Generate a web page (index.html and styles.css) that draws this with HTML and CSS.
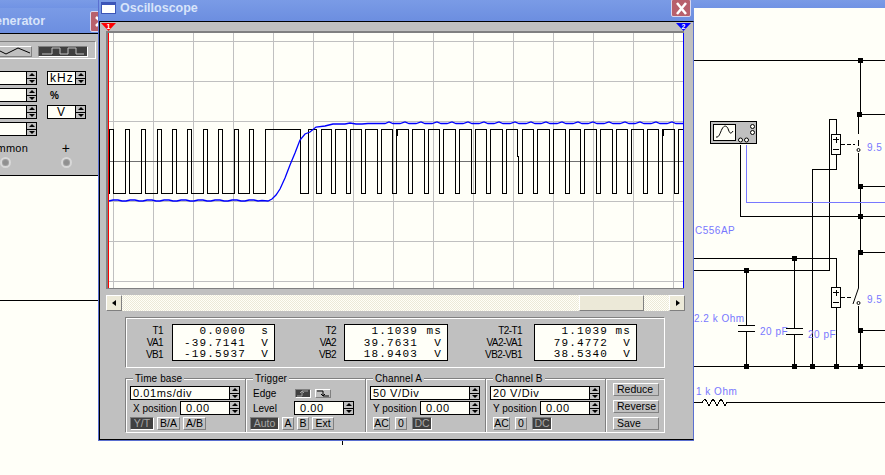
FILE: index.html
```html
<!DOCTYPE html>
<html lang="en">
<head>
<meta charset="utf-8">
<title>Oscilloscope</title>
<link rel="stylesheet" href="styles.css">
</head>
<body>
<main class="desktop">
  <div class="topstrip"></div>

  <svg class="schematic" viewBox="0 0 885 475" width="885" height="475">
    <g class="wire">
      <path d="M0 300.5H99"/>
      <path d="M342.500 440V445"/>
      <path d="M694 60.500H885"/>
      <path d="M860.500 60V114"/>
      <path d="M858.500 114.500H885"/>
      <path d="M858.500 114V134M858.500 140V146M858.500 153V186"/>
      <path d="M860 186.500H885"/>
      <path d="M860.500 186V252"/>
      <path d="M858.500 252V288M858.500 306V330"/>
      <path d="M860 252.500H885"/>
      <path d="M860 330.500H885"/>
      <path d="M860.500 330V366"/>
      <path d="M694 366.500H885"/>
      <path d="M694 258.500H836.500V287"/>
      <path d="M694 270.500H829.500V119.500H836.500V134"/>
      <path d="M836.500 154V169.500H812.500V366"/>
      <path d="M836.500 307V366"/>
      <path d="M746.500 270V325M746.500 332V366M738 325.500H755M738 331.500H755"/>
      <path d="M794.500 258V328M794.500 335V366M786 328.500H803M786 334.500H803"/>
      <path d="M740.500 145V216.500H885"/>
      <path d="M694 402.500H702L705 399L709 405.500L713 399L717 405.500L721 399L725 405.500L727 402.500H885"/>
      <path class="dash" d="M841 144.500H855"/>
      <path class="dash" d="M841 297.500H853"/>
      <path d="M853 304L858.500 288"/>
    </g>
    <path class="probe" d="M746.500 145V202.500H885"/>
    <g class="node">
      <rect x="858" y="58" width="5" height="5"/><rect x="857" y="112" width="5" height="5"/>
      <rect x="858" y="184" width="5" height="5"/><rect x="858" y="214" width="5" height="5"/>
      <rect x="858" y="250" width="5" height="5"/><rect x="858" y="328" width="5" height="5"/>
      <rect x="744" y="268" width="5" height="5"/><rect x="792" y="256" width="5" height="5"/>
      <rect x="744" y="364" width="5" height="5"/><rect x="792" y="364" width="5" height="5"/>
      <rect x="810" y="364" width="5" height="5"/><rect x="834" y="364" width="5" height="5"/>
      <rect x="858" y="364" width="5" height="5"/>
    </g>
    <g class="relay">
      <rect x="831.500" y="134.500" width="9" height="20"/>
      <path d="M833 139.500H839M836 136.500V142.500M833 149.500H839"/>
      <rect x="831.500" y="287.500" width="9" height="20"/>
      <path d="M833 292.500H839M836 289.500V295.500M833 302.500H839"/>
      <circle cx="858.500" cy="150" r="1.500"/>
      <circle cx="858.500" cy="303" r="1.500"/>
    </g>
    <g class="scope-icon">
      <rect class="case" x="710.500" y="121.500" width="46" height="22"/>
      <rect class="face" x="713.500" y="124.500" width="22" height="16"/>
      <path class="sine" d="M716 137C719 138 720 133 722 129C724 125 727 125 728.500 130C730 134 731 134 733 131"/>
      <circle cx="752.500" cy="126.500" r="2"/><circle cx="752.500" cy="132.500" r="2"/>
      <circle cx="740.500" cy="140" r="2"/><circle cx="746.500" cy="140" r="2"/>
    </g>
    <g class="label">
      <text x="695" y="234">C556AP</text>
      <text x="694" y="322">2.2 k Ohm</text>
      <text x="760" y="335">20 pF</text>
      <text x="808" y="338">20 pF</text>
      <text x="696" y="395">1 k Ohm</text>
      <text x="867" y="151">9.5 V</text>
      <text x="867" y="303">9.5 V</text>
    </g>
  </svg>

  <section class="generator">
    <header class="gen-title">
      <span>Function Generator</span>
      <span class="closebtn gen-close"><svg viewBox="0 0 19 19" width="19" height="19"><path d="M5 5L14 14M14 5L5 14"/></svg></span>
    </header>
    <div class="gen-body">
      <div class="wave-group">
        <span class="wave-btn"><svg viewBox="0 0 50 10" width="50" height="10"><path d="M2 5L12 2L24 8L36 2L48 7"/></svg></span>
        <span class="wave-btn wave-on"><svg viewBox="0 0 50 10" width="50" height="10"><path d="M4 8H14V2H22V8H30V2H38V8H46"/></svg></span>
      </div>
      <div class="gen-row">
        <span class="field gen-field"><span class="spin"><i></i><i></i></span></span>
        <span class="field gen-unit">kHz<span class="spin"><i></i><i></i></span></span>
      </div>
      <div class="gen-row">
        <span class="field gen-field"><span class="spin"><i></i><i></i></span></span>
        <span class="gen-percent">%</span>
      </div>
      <div class="gen-row">
        <span class="field gen-field"><span class="spin"><i></i><i></i></span></span>
        <span class="field gen-unit gen-unit-v">V<span class="spin"><i></i><i></i></span></span>
      </div>
      <div class="gen-row">
        <span class="field gen-field"><span class="spin"><i></i><i></i></span></span>
      </div>
      <div class="terminals">
        <div class="terminal"><span>Common</span><i class="jack"></i></div>
        <div class="terminal"><span class="plus">+</span><i class="jack"></i></div>
      </div>
    </div>
  </section>

  <section class="scope">
    <header class="scope-title">
      <span class="win-icon"></span>
      <span>Oscilloscope</span>
      <span class="closebtn scope-close"><svg viewBox="0 0 19 17" width="19" height="17"><path d="M5 3L14 14M14 3L5 14"/></svg></span>
    </header>
    <div class="scope-body">
      <svg class="flag flag-1" viewBox="0 0 15 8" width="15" height="8"><path d="M0 0H15L7.500 8Z"/><text x="7.500" y="6">1</text></svg>
      <svg class="flag flag-2" viewBox="0 0 15 8" width="15" height="8"><path d="M0 0H15L7.500 8Z"/><text x="7.500" y="6">2</text></svg>
      <div class="plot">
        <svg viewBox="108 33 576 255" width="576" height="255">
          <g class="grid">
            <path d="M113 33V288M153 33V288M193 33V288M233 33V288M273 33V288M313 33V288M353 33V288M393 33V288M433 33V288M473 33V288M513 33V288M553 33V288M593 33V288M633 33V288M673 33V288"/>
            <path d="M108 41.500H684M108 81.500H684M108 121.500H684M108 201.500H684M108 241.500H684M108 281.500H684"/>
          </g>
          <path class="axis" d="M108 161.500H684"/>
          <path class="trace-a" d="M109.500 193.500V129.500H113.500V193.500H125.500V129.500H129.500V193.500H141.500V129.500H145.500V193.500H157.500V129.500H161.500V193.500H172.500V129.500H176.500V193.500H187.500V129.500H191.500V193.500H203.500V129.500H207.500V193.500H218.500V129.500H222.500V193.500H234.500V129.500H238.500V193.500H249.500V129.500H253.500V193.500H265.500V129.500H300.500V193.500H308.500V129.500H316.500V193.500H321.500V129.500H331.500V193.500H335.500V129.500H346.500V193.500H350.500V129.500H361.500V193.500H365.500V129.500H377.500V193.500H381.500V129.500H392.500V193.500H396.500V129.500H408.500V193.500H412.500V129.500H424.500V193.500H428.500V129.500H439.500V193.500H443.500V129.500H455.500V193.500H459.500V129.500H471.500V193.500H475.500V129.500H486.500V193.500H490.500V129.500H502.500V193.500H506.500V129.500H517.500V156H518.500V193.500H522.500V129.500H533.500V193.500H537.500V129.500H549.500V193.500H553.500V129.500H565.500V193.500H569.500V129.500H580.500V193.500H584.500V129.500H596.500V193.500H600.500V129.500H612.500V193.500H616.500V129.500H627.500V193.500H631.500V129.500H643.500V193.500H647.500V129.500H658.500V193.500H662.500V129.500H674.500V193.500H678.500V129.500H683"/>
          <path class="trace-a" d="M172.500 145V130M176.500 187V193M397.500 129V136M663.500 129V136"/>
          <polyline class="trace-b" points="109,201 113,200 118,200 122,201 126,201 130,200 135,200 139,201 143,201 147,200 152,200 156,201 160,201 164,200 169,200 173,201 177,201 181,200 186,200 190,201 194,201 198,200 203,200 207,201 211,201 215,200 220,200 224,201 228,201 232,200 237,200 241,201 245,201 249,200 254,200 258,201 262,200.500 268,201 272,199 276,195 280,189 285,178 290,165 295,153 300,140 305,134 310,132 316,127 325,126 333,124 345,124 350,123 356,124 362,124 368,123.500 374,123.500 380,123.500 385,123.500 389,122 393,123.500 400,123.500 405,122 409,123.500 416,123.500 421,122 425,123.500 432,123.500 437,122 441,123.500 447,123.500 452,122 456,123.500 463,123.500 468,122 472,123.500 479,123.500 484,122 488,123.500 494,123.500 499,122 503,123.500 510,123.500 515,122 519,123.500 526,123.500 531,122 535,123.500 541,123.500 546,122 550,123.500 557,123.500 562,122 566,123.500 573,123.500 578,122 582,123.500 588,123.500 593,122 597,123.500 604,123.500 609,122 613,123.500 620,123.500 625,122 629,123.500 635,123.500 640,122 644,123.500 651,123.500 656,122 660,123.500 667,123.500 672,122 676,123.500 683,123.500"/>
          <path class="cursor-1" d="M108.500 33V288"/>
          <path class="cursor-2" d="M683.500 33V288"/>
        </svg>
      </div>

      <div class="scrollbar">
        <span class="sb-btn sb-left"></span>
        <span class="sb-track"><span class="sb-thumb"></span></span>
        <span class="sb-btn sb-right"></span>
      </div>

      <div class="readouts">
        <div class="r-labels"><span>T1</span><span>VA1</span><span>VB1</span></div>
        <div class="r-box">
          <div><span class="val">0.0000</span><span class="unit">s</span></div>
          <div><span class="val">-39.7141</span><span class="unit">V</span></div>
          <div><span class="val">-19.5937</span><span class="unit">V</span></div>
        </div>
        <div class="r-labels"><span>T2</span><span>VA2</span><span>VB2</span></div>
        <div class="r-box r-box-wide">
          <div><span class="val">1.1039</span><span class="unit">ms</span></div>
          <div><span class="val">39.7631</span><span class="unit">V</span></div>
          <div><span class="val">18.9403</span><span class="unit">V</span></div>
        </div>
        <div class="r-labels"><span>T2-T1</span><span>VA2-VA1</span><span>VB2-VB1</span></div>
        <div class="r-box">
          <div><span class="val">1.1039</span><span class="unit">ms</span></div>
          <div><span class="val">79.4772</span><span class="unit">V</span></div>
          <div><span class="val">38.5340</span><span class="unit">V</span></div>
        </div>
      </div>

      <div class="controls">
        <div class="ctl">
          <span class="legend">Time base</span>
          <div class="field combo">0.01ms/div<span class="spin"><i></i><i></i></span></div>
          <div class="ctl-row"><span class="ctl-label">X position</span><span class="field num">0.00<span class="spin"><i></i><i></i></span></span></div>
          <div class="btn-row"><span class="btn on w24">Y/T</span><span class="btn w23">B/A</span><span class="btn w23">A/B</span></div>
        </div>
        <div class="ctl ctl-trigger">
          <span class="legend">Trigger</span>
          <div class="ctl-row edge-row"><span class="ctl-label">Edge</span>
            <span class="edge-btns">
              <span class="btn edge on"><svg viewBox="0 0 16 9" width="16" height="9"><path d="M2 7H7V2H13M5 4L7 2L9 4"/></svg></span>
              <span class="btn edge"><svg viewBox="0 0 16 9" width="16" height="9"><path d="M2 2H8V7H14M6 5L8 7L10 5"/></svg></span>
            </span>
          </div>
          <div class="ctl-row"><span class="ctl-label">Level</span><span class="field num">0.00<span class="spin"><i></i><i></i></span></span></div>
          <div class="btn-row"><span class="btn on w29">Auto</span><span class="btn w12">A</span><span class="btn w12">B</span><span class="btn w22">Ext</span></div>
        </div>
        <div class="ctl">
          <span class="legend">Channel A</span>
          <div class="field combo">50 V/Div<span class="spin"><i></i><i></i></span></div>
          <div class="ctl-row"><span class="ctl-label">Y position</span><span class="field num">0.00<span class="spin"><i></i><i></i></span></span></div>
          <div class="btn-row coupling"><span class="btn w16">AC</span><span class="btn w12">0</span><span class="btn on w20">DC</span></div>
        </div>
        <div class="ctl">
          <span class="legend">Channel B</span>
          <div class="field combo">20 V/Div<span class="spin"><i></i><i></i></span></div>
          <div class="ctl-row"><span class="ctl-label">Y position</span><span class="field num">0.00<span class="spin"><i></i><i></i></span></span></div>
          <div class="btn-row coupling"><span class="btn w16">AC</span><span class="btn w12">0</span><span class="btn on w20">DC</span></div>
        </div>
        <div class="ctl ctl-actions">
          <span class="btn action">Reduce</span>
          <span class="btn action">Reverse</span>
          <span class="btn action">Save</span>
        </div>
      </div>
    </div>
  </section>
</main>
</body>
</html>
```
FILE: styles.css
```css
* { box-sizing: border-box; }
html, body { margin: 0; padding: 0; }
body { background: #fffff8; font-family: "Liberation Sans", Arial, sans-serif; font-size: 10.500px; color: #000; overflow: hidden; }

.desktop { position: relative; width: 885px; height: 475px; overflow: hidden; background: #fffff8; }
.topstrip { height: 8px; background: linear-gradient(#7a9be6, #7193e4); }

/* schematic canvas */
.schematic { position: absolute; left: 0; top: 0; }
.wire path { fill: none; stroke: #000; stroke-width: 1; shape-rendering: crispEdges; }
.wire path:last-child { shape-rendering: auto; }
.wire .dash { stroke-dasharray: 4 2; }
.probe { fill: none; stroke: #7878ff; stroke-width: 1; shape-rendering: crispEdges; }
.node rect { fill: #000; }
.relay rect, .relay circle { fill: #fffff8; stroke: #000; stroke-width: 1; }
.relay path { fill: none; stroke: #000; stroke-width: 1; shape-rendering: crispEdges; }
.scope-icon .case { fill: #c0c0c0; stroke: #000; }
.scope-icon .face { fill: #fffff8; stroke: #000; }
.scope-icon .sine { fill: none; stroke: #000; }
.scope-icon circle { fill: #fffff8; stroke: #000; }
.label text { fill: #7878ff; font-family: "Liberation Sans", Arial, sans-serif; font-size: 10px; letter-spacing: 0.5px; }

/* generic window parts */
.closebtn { position: absolute; display: block; background: #b8606c; border: 1px solid #d8d8f0; border-radius: 2px; }
.closebtn svg { display: block; }
.closebtn path { fill: none; stroke: #fff; stroke-width: 2.500; }

.field { position: relative; display: flex; align-items: center; flex: none; height: 14px; background: #fffff8; border: 1px solid #000; padding-left: 2px; font-size: 11px; letter-spacing: 0.6px; white-space: nowrap; }
.spin { position: absolute; right: -1px; top: -1px; bottom: -1px; width: 11px; display: flex; flex-direction: column; border: 1px solid #000; background: #c0c0c0; }
.spin i { flex: 1; position: relative; display: block; }
.spin i::after { content: ""; position: absolute; left: 2px; top: 1px; border: 3px solid transparent; border-top: 0; border-bottom: 3px solid #000; }
.spin i:last-child { border-top: 1px solid #000; }
.spin i:last-child::after { border-bottom: 0; border-top: 3px solid #000; }

.btn { display: flex; align-items: center; justify-content: center; height: 13px; background: #c0c0c0; border: 1px solid; border-color: #fff #808080 #808080 #fff; font-size: 10.500px; letter-spacing: 0; line-height: 1; white-space: nowrap; }
.btn.on { background: #404040; color: #a8a8a8; border-color: #808080 #fff #fff #808080; }

/* function generator */
.generator { position: absolute; left: -140px; top: 8px; width: 250px; height: 168px; background: #c0c0c0; border-bottom: 1px solid #000; }
.gen-title { position: relative; height: 26px; background: linear-gradient(#7a9be6, #6c8ee0); border-bottom: 1px solid #000; font-weight: 700; font-size: 12.500px; color: #d8e4fa; padding: 6px 65px 0 0; text-align: right; }
.gen-close { left: 230px; top: 3px; width: 21px; height: 21px; }
.gen-body { padding: 7px 0 0 40px; }
.wave-group { display: flex; justify-content: flex-end; gap: 6px; width: 196px; height: 18px; padding: 4px 7px 0 0; border: 1px solid; border-color: #808080 #fff #fff #808080; margin-bottom: 12px; }
.wave-btn { display: block; width: 50px; height: 11px; border: 1px solid; border-color: #fff #808080 #808080 #fff; background: #c0c0c0; }
.wave-btn svg { display: block; margin: -1px; }
.wave-btn path { fill: none; stroke: #000; stroke-width: 1; }
.wave-on { background: #404040; border-color: #808080 #fff #fff #808080; }
.wave-on path { stroke: #c0c0c0; }
.gen-row { display: flex; align-items: center; height: 14px; margin-bottom: 3px; }
.gen-field { width: 137px; }
.gen-unit { width: 39px; margin-left: 10px; font-size: 12px; letter-spacing: 1px; }
.gen-unit-v { padding-left: 9px; }
.gen-percent { margin-left: 13px; font-weight: 700; font-size: 10px; }
.terminals { display: grid; grid-template-columns: 61px 61px; margin: 6px 0 0 74.500px; }
.terminal { display: flex; flex-direction: column; align-items: center; height: 32px; font-size: 11px; letter-spacing: 0.3px; line-height: 12px; }
.plus { font-size: 14px; }
.jack { display: block; width: 11px; height: 11px; margin-top: 3px; border-radius: 50%; background: #909090; border: 2px solid #d8d8d8; box-shadow: 0 0 0 1px #a0a0a0 inset; }

/* oscilloscope */
.scope { position: absolute; left: 98px; top: 0; width: 596px; height: 441px; background: #c0c0c0; border: 1px solid #5a6fd0; border-top: 0; border-right: 0; }
.scope::after { content: ""; position: absolute; left: 0; right: 0; top: 21px; bottom: 0; border: 1px solid #000; border-right-color: #5a6fd0; pointer-events: none; }
.scope-title { position: relative; display: flex; align-items: center; gap: 4px; height: 21px; padding: 0 0 5px 2px; background: linear-gradient(#7a9be6, #6c8ee0); font-weight: 700; font-size: 12.500px; color: #d8e4fa; }
.win-icon { display: block; width: 15px; height: 12px; background: #fff; border: 1px solid #3c55b8; border-top-width: 3px; }
.scope-close { left: 572px; top: -1px; width: 20px; height: 18px; }
.scope-body { position: relative; padding: 10px 0 0 7px; }
.flag { position: absolute; top: 2px; }
.flag text { font-size: 7px; font-weight: 700; fill: #fff; text-anchor: middle; font-family: "Liberation Sans", Arial, sans-serif; }
.flag-1 { left: 2px; }
.flag-1 path { fill: #ff0000; }
.flag-2 { left: 577px; }
.flag-2 path { fill: #0000ff; }
.plot { width: 578px; height: 258px; border: 2px solid #808080; border-width: 2px 0 1px 2px; background: #fffff8; }
.plot svg { display: block; }
.grid path { fill: none; stroke: #c0c0c0; stroke-width: 1; shape-rendering: crispEdges; }
.axis { stroke: #707070; stroke-width: 1; shape-rendering: crispEdges; }
.trace-a { fill: none; stroke: #000; stroke-width: 1; shape-rendering: crispEdges; }
.trace-b { fill: none; stroke: #0000ff; stroke-width: 1.300; }
.cursor-1 { stroke: #ff0000; stroke-width: 1; shape-rendering: crispEdges; }
.cursor-2 { stroke: #0000ff; stroke-width: 1; shape-rendering: crispEdges; }

.scrollbar { display: flex; width: 579px; height: 16px; margin-top: 6px; }
.sb-btn { position: relative; display: block; width: 16px; background: #ece9d8; border: 1px solid; border-color: #fff #808080 #808080 #fff; }
.sb-btn::after { content: ""; position: absolute; top: 4px; border: 3.500px solid transparent; }
.sb-left::after { left: 2px; border-right: 4px solid #000; }
.sb-right::after { left: 6px; border-left: 4px solid #000; }
.sb-track { flex: 1; display: flex; justify-content: flex-end; padding-right: 25px; background: repeating-conic-gradient(#ece9d8 0 25%, #fffff8 0 50%) 0 0 / 2px 2px; }
.sb-thumb { display: block; width: 65px; background: #ece9d8; border: 1px solid; border-color: #fff #808080 #808080 #fff; }

.readouts { display: grid; grid-template-columns: 37px 112px 61px 112px 74px 115px; width: 540px; height: 51px; margin: 6px 0 0 19px; padding: 6px 0 0 0; border: 1px solid; border-color: #808080 #fff #fff #808080; box-shadow: inset 1px 1px 0 #fff; }
.r-labels { display: flex; flex-direction: column; justify-content: center; align-items: flex-end; height: 37px; font-size: 10px; line-height: 12px; letter-spacing: -0.6px; white-space: nowrap; }
.r-box { justify-self: end; height: 37px; width: 103px; padding: 1px 5px 0 0; background: #fffff8; border: 1px solid #000; font-family: "Liberation Mono", monospace; font-size: 11px; line-height: 11.500px; letter-spacing: 1.150px; white-space: nowrap; }
.r-box-wide { width: 104px; }
.r-box div { display: flex; justify-content: space-between; }
.val { width: 73px; text-align: right; }
.unit { text-align: right; }

.controls { display: flex; width: 540px; height: 55px; margin: 10px 0 0 19px; border: 1px solid; border-color: #808080 #fff #fff #808080; box-shadow: inset 1px 1px 0 #fff; }
.ctl { position: relative; width: 120px; padding: 7px 5px 0 4px; border-right: 1px solid #808080; box-shadow: 1px 0 0 #fff; }
.legend { position: absolute; left: 7px; top: -7px; padding: 0 2px; background: #c0c0c0; font-size: 10px; line-height: 13px; letter-spacing: 0.1px; white-space: nowrap; }
.combo { width: 110px; height: 14px; padding-left: 2px; }
.ctl-row { display: flex; align-items: center; justify-content: space-between; height: 14px; margin-top: 1px; }
.ctl-label { padding-left: 3px; font-size: 10px; white-space: nowrap; }
.num { width: 60px; padding-left: 5px; }
.btn-row { display: flex; gap: 3px; margin-top: 2px; }
.w12 { width: 12px; }
.w16 { width: 17px; }
.w20 { width: 20px; }
.w22 { width: 22px; }
.w23 { width: 23px; }
.w24 { width: 24px; }
.w29 { width: 29px; }
.ctl-trigger { padding-right: 11px; }
.edge-row { margin-top: 0; }
.edge-btns { display: flex; gap: 4px; margin-right: 23px; }
.edge { width: 16px; height: 9px; }
.edge path { fill: none; stroke: #000; stroke-width: 1; }
.edge.on path { stroke: #a0a0a0; }
.edge svg { display: block; flex: none; margin: -1px; }
.coupling { gap: 5px; padding-left: 3px; }
.ctl-actions { display: flex; flex-direction: column; gap: 4px; width: 58px; padding: 4px 0 0 7px; border-right: 0; box-shadow: none; }
.action { width: 46px; height: 13px; justify-content: flex-start; padding-left: 3px; font-size: 10.500px; }
```
